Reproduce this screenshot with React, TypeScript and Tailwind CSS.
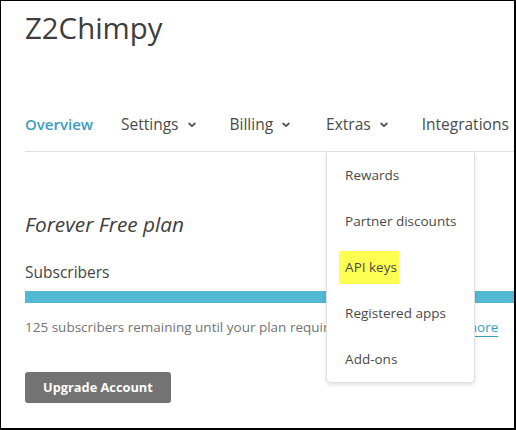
import type { ReactNode } from "react";

function Chevron() {
  return (
    <svg
      width="8"
      height="6"
      viewBox="0 0 8 6"
      className="ml-[9px] mr-[6px] mt-[1px]"
      fill="none"
      stroke="#555555"
      strokeWidth="1.8"
      strokeLinecap="round"
      strokeLinejoin="round"
    >
      <path d="M1.2 1.5 4 4.2 6.8 1.5" />
    </svg>
  );
}

function NavItem({
  children,
  active,
  dropdown,
  className = "",
}: {
  children: ReactNode;
  active?: boolean;
  dropdown?: boolean;
  className?: string;
}) {
  return (
    <div className={"flex items-center " + className}>
      <span className={active ? "font-semibold text-[#3a9dc0]" : "text-[#4a4a4a]"}>{children}</span>
      {dropdown && <Chevron />}
    </div>
  );
}

const extras = ["Rewards", "Partner discounts", "API keys", "Registered apps", "Add-ons"];

export default function App() {
  return (
    <div
      className="w-[516px] h-[430px] overflow-hidden bg-white border-l border-t border-r-2 border-b-2 border-black"
      style={{ fontFamily: "'Open Sans', 'Liberation Sans', sans-serif" }}
    >
      <div className="pl-[24px] pt-[9px] whitespace-nowrap">
        <h1 className="text-[29.4px] leading-[36px] text-[#3d3d3d]">Z2Chimpy</h1>

        {/* Nav */}
        <div className="mt-[66px] flex pb-[15px] border-b border-[#e0e0e0] text-[15.5px] leading-[24px]">
          <NavItem active className="text-[15px]">Overview</NavItem>
          <NavItem dropdown className="ml-[28px]">Settings</NavItem>
          <NavItem dropdown className="ml-[28px]">Billing</NavItem>
          <div className="relative ml-[30px]">
            <NavItem dropdown>Extras</NavItem>
            <div className="absolute left-0 top-[40px] z-10 w-[149px] bg-white border-x border-b border-[#e0e0e0] rounded-b-[5px] shadow-[0_2px_4px_rgba(0,0,0,0.12)]">
              {extras.map((item) => (
                <div key={item} className="h-[46px] flex items-center pl-[12px] text-[13.5px] leading-[20px] text-[#4a4a4a]">
                  {item === "API keys" ? (
                    <span className="h-[33px] flex items-center pl-[6px] pr-[2px] bg-[#ffff52]">{item}</span>
                  ) : (
                    <span className="pl-[6px]">{item}</span>
                  )}
                </div>
              ))}
            </div>
          </div>
          <NavItem className="ml-[28px]">Integrations</NavItem>
        </div>

        {/* Plan */}
        <h2 className="mt-[57px] text-[20.8px] leading-[30px] italic text-[#404040]">Forever Free plan</h2>
        <div className="mt-[21px] text-[15.5px] leading-[24px] text-[#444444]">Subscribers</div>
        <div className="mt-[7px] h-[12px] bg-[#52b8d4]" />
        <p className="mt-[14px] text-[13.5px] leading-[20px] text-[#737373]">
          125 subscribers remaining until your plan requires an upgrade.{" "}
          <span className="text-[#3a9dc0] underline decoration-1 underline-offset-[4px]">Learn more</span>
        </p>
        <button className="mt-[35px] h-[31px] px-[18px] rounded-[3px] bg-[#737373] text-white text-[12.8px] font-bold">
          Upgrade Account
        </button>
      </div>
    </div>
  );
}
